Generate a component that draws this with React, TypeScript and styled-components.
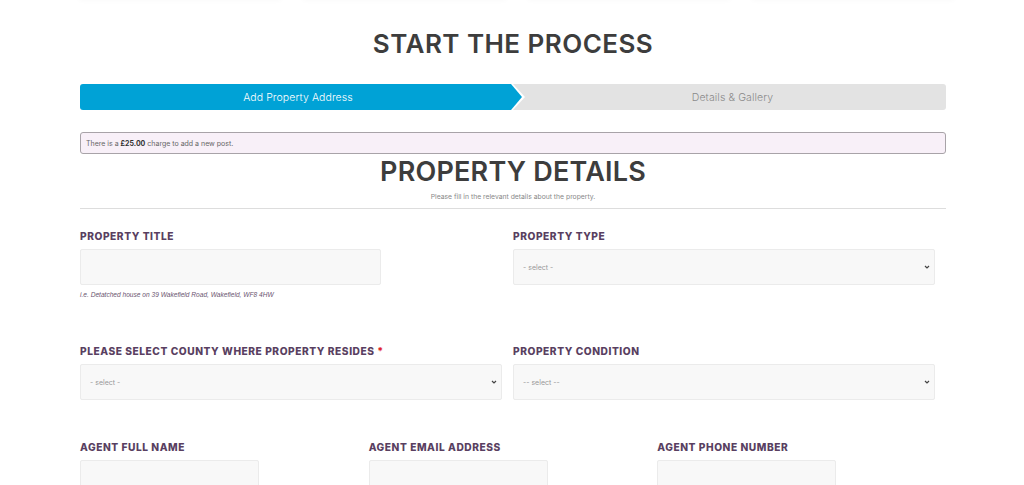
import React from "react";
import styled, { createGlobalStyle } from "styled-components";

const Global = createGlobalStyle`
  html, body { margin: 0; padding: 0; background: #fff; }
  body { font-family: Inter, "Open Sans", Arial, sans-serif; color: #333; overflow: hidden; }
  * { box-sizing: border-box; }
`;

const Page = styled.div`
  width: 1024px;
  height: 485px;
  overflow: hidden;
  position: relative;
`;

const TopCards = styled.div`
  display: flex;
  gap: 22px;
  padding: 0 70px 0 79px;
  margin-top: -44px;
  height: 44px;
`;

const TopCard = styled.div`
  flex: 1;
  background: #fff;
  box-shadow: 0 1px 5px rgba(0, 0, 0, 0.025);
`;

const Container = styled.div`
  width: 866px;
  margin: 0 78px 0 80px;
`;

const MainTitle = styled.h1`
  margin: 0;
  padding-top: 27px;
  height: 84px;
  text-align: center;
  font-size: 26px;
  font-weight: 600;
  color: #3d3d3d;
  letter-spacing: 0.45px;
  line-height: 34px;
`;

const Steps = styled.div`
  display: flex;
  height: 26px;
  background: #e3e3e3;
  border-radius: 3px;
  overflow: hidden;
`;

const ActiveEdge = styled.div`
  width: calc(50% + 12px);
  margin-right: -12px;
  position: relative;
  z-index: 1;
  background: #fff;
  clip-path: polygon(0 0, calc(100% - 12px) 0, 100% 50%, calc(100% - 12px) 100%, 0 100%);
`;

const ActiveStep = styled.div`
  height: 100%;
  width: calc(100% - 3px);
  background: #00a2d6;
  clip-path: polygon(0 0, calc(100% - 11px) 0, 100% 50%, calc(100% - 11px) 100%, 0 100%);
  display: flex;
  align-items: center;
  justify-content: center;
  padding-right: 6px;
  color: #fff;
  font-size: 10.5px;
  font-weight: 300;
  letter-spacing: 0.1px;
`;

const Step = styled.div`
  flex: 1;
  display: flex;
  align-items: center;
  justify-content: center;
  padding-left: 6px;
  color: #8a8a8a;
  font-size: 10.5px;
  font-weight: 300;
  letter-spacing: 0.1px;
`;

const Notice = styled.div`
  margin-top: 22px;
  height: 22px;
  background: #f8f0f8;
  border: 1px solid #a8a3a8;
  border-radius: 3px;
  padding: 0 5px;
  display: flex;
  align-items: center;
  font-size: 7px;
  color: #666;
  b { color: #333; font-weight: 700; }
`;

const SectionTitle = styled.h2`
  margin: 1px 0 0;
  text-align: center;
  font-size: 27px;
  font-weight: 600;
  color: #3d3d3d;
  line-height: 34px;
  letter-spacing: 0.2px;
`;

const SectionSub = styled.p`
  margin: 3px 0 0;
  text-align: center;
  font-size: 6.8px;
  color: #888;
  line-height: 10px;
`;

const Rule = styled.hr`
  border: 0;
  border-top: 1px solid #ddd;
  margin: 6px 0 0;
`;

const Row = styled.div<{ $cols: number; $top: number }>`
  display: grid;
  grid-template-columns: repeat(${(p) => p.$cols}, 1fr);
  margin-top: ${(p) => p.$top}px;
`;

const Field = styled.div`
  padding-right: 11px;
  position: relative;
`;

const Label = styled.label`
  display: block;
  font-size: 10.2px;
  font-weight: 800;
  color: #593f61;
  letter-spacing: 0.55px;
  line-height: 12px;
  margin-bottom: 7px;
  span { color: #e0262b; }
`;

const TextInput = styled.input<{ $w?: number }>`
  display: block;
  width: ${(p) => (p.$w ? `${p.$w}px` : "100%")};
  height: 36px;
  background: #f8f8f8;
  border: 1px solid #ebebeb;
  border-radius: 2px;
  outline: none;
`;

const SelectWrap = styled.div`
  position: relative;
`;

const Select = styled.select`
  display: block;
  width: 100%;
  height: 36px;
  appearance: none;
  -webkit-appearance: none;
  background: #f8f8f8;
  border: 1px solid #ebebeb;
  border-radius: 2px;
  padding: 0 9px;
  font-family: inherit;
  font-size: 7px;
  color: #999;
  outline: none;
`;

const Chevron = styled.svg`
  position: absolute;
  right: 5px;
  top: 15px;
  width: 6px;
  height: 6px;
  pointer-events: none;
`;

const Hint = styled.div`
  margin-top: 6px;
  font-family: "Liberation Sans", Arial, sans-serif;
  font-style: italic;
  font-size: 6.6px;
  color: #6b5570;
`;

const SelectField: React.FC<{ value: string }> = ({ value }) => (
  <SelectWrap>
    <Select defaultValue={value}>
      <option>{value}</option>
    </Select>
    <Chevron viewBox="0 0 6 6">
      <path d="M1 2 L3 4 L5 2" stroke="#444" strokeWidth="1.2" fill="none" />
    </Chevron>
  </SelectWrap>
);

export default function App() {
  return (
    <Page>
      <Global />
      <TopCards>
        <TopCard />
        <TopCard />
        <TopCard />
        <TopCard />
      </TopCards>
      <Container>
        <MainTitle>START THE PROCESS</MainTitle>
        <Steps>
          <ActiveEdge>
            <ActiveStep>Add Property Address</ActiveStep>
          </ActiveEdge>
          <Step>Details &amp; Gallery</Step>
        </Steps>
        <Notice>
          <span>
            There is a <b>£25.00</b> charge to add a new post.
          </span>
        </Notice>
        <SectionTitle>PROPERTY DETAILS</SectionTitle>
        <SectionSub>Please fill in the relevant details about the property.</SectionSub>
        <Rule />
        <Row $cols={2} $top={21}>
          <Field>
            <Label>PROPERTY TITLE</Label>
            <TextInput $w={301} />
            <Hint>i.e. Detatched house on 39 Wakefield Road, Wakefield, WF8 4HW</Hint>
          </Field>
          <Field>
            <Label>PROPERTY TYPE</Label>
            <SelectField value="- select -" />
          </Field>
        </Row>
        <Row $cols={2} $top={47}>
          <Field>
            <Label>
              PLEASE SELECT COUNTY WHERE PROPERTY RESIDES <span>*</span>
            </Label>
            <SelectField value="- select -" />
          </Field>
          <Field>
            <Label>PROPERTY CONDITION</Label>
            <SelectField value="-- select --" />
          </Field>
        </Row>
        <Row $cols={3} $top={41}>
          <Field>
            <Label>AGENT FULL NAME</Label>
            <TextInput $w={179} />
          </Field>
          <Field>
            <Label>AGENT EMAIL ADDRESS</Label>
            <TextInput $w={179} />
          </Field>
          <Field>
            <Label>AGENT PHONE NUMBER</Label>
            <TextInput $w={179} />
          </Field>
        </Row>
      </Container>
    </Page>
  );
}
